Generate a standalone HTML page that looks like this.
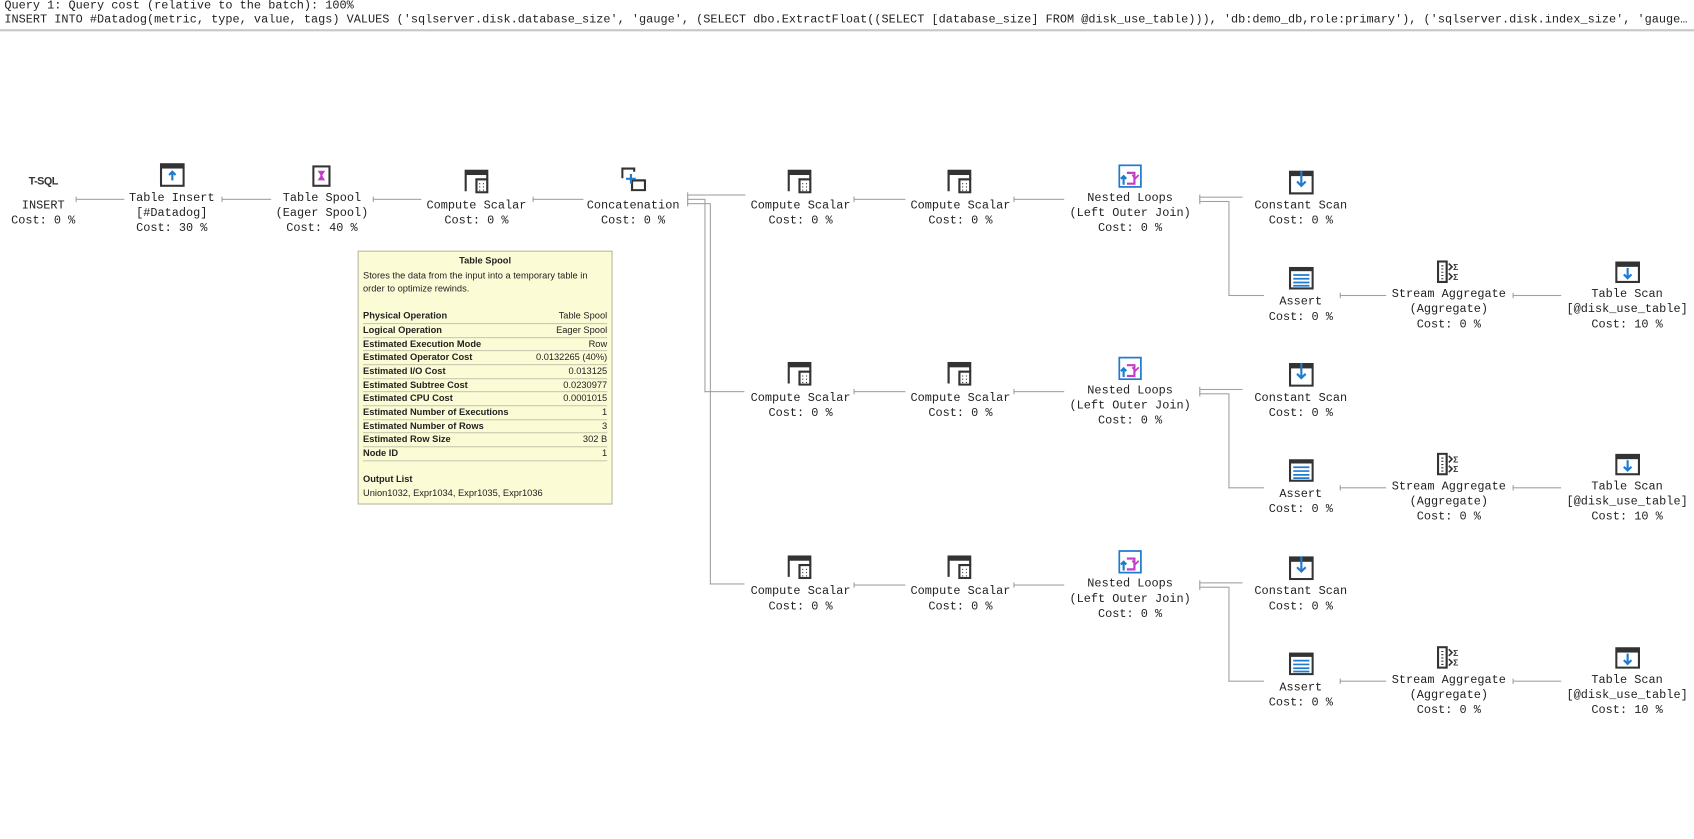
<!DOCTYPE html>
<html><head><meta charset="utf-8">
<style>
html,body{margin:0;padding:0;background:#fff;width:1694px;height:839px;overflow:hidden}
#w{position:absolute;left:0;top:0;width:1568px;height:777px;overflow:hidden;transform:scale(1.0804);transform-origin:0 0;font-family:"Liberation Mono",monospace;font-size:11px;color:#222}
.hd{position:absolute;left:4px;width:1558px;overflow:hidden;white-space:pre;line-height:13px;text-overflow:ellipsis}
.n{position:absolute;width:200px;text-align:center;line-height:14px;white-space:pre}
.ic{position:absolute}
.h{position:absolute;height:1px;background:#a0a0a0}
.v{position:absolute;width:1px;background:#a0a0a0}
.a{position:absolute;width:1px;height:5px;background:#a0a0a0}
#tt{position:absolute;left:331px;top:232px;width:234px;height:233px;background:#fbfbd6;border:1px solid #b8b8a0;font-family:"Liberation Sans",sans-serif;font-size:8.6px;color:#222}
#tt .r{position:absolute;left:4px;right:4px;height:12.7px;border-bottom:1px solid #c9c9b0;line-height:12px}
#tt .r b{float:left}
#tt .r span{float:right}
</style></head><body><div id="w">
<div class="hd" style="top:0">Query 1: Query cost (relative to the batch): 100%</div>
<div class="hd" style="top:13px">INSERT INTO #Datadog(metric, type, value, tags) VALUES ('sqlserver.disk.database_size', 'gauge', (SELECT dbo.ExtractFloat((SELECT [database_size] FROM @disk_use_table))), 'db:demo_db,role:primary'), ('sqlserver.disk.index_size', 'gauge', (SELECT dbo...</div>
<div style="position:absolute;left:0;top:27px;width:1568px;height:2px;background:#c8c8c8"></div>

<div class="n" style="left:-60px;top:162px;font-family:'Liberation Sans',sans-serif;font-size:10px;font-weight:bold;letter-spacing:-0.5px;color:#333">T-SQL</div>
<div class="n" style="left:-60px;top:184px">INSERT
Cost: 0 %</div>
<div class="n" style="left:59px;top:177px">Table Insert
[#Datadog]
Cost: 30 %</div>
<div class="n" style="left:198px;top:177px">Table Spool
(Eager Spool)
Cost: 40 %</div>
<div class="n" style="left:341px;top:184px">Compute Scalar
Cost: 0 %</div>
<div class="n" style="left:486px;top:184px">Concatenation
Cost: 0 %</div>

<svg class="ic" style="left:148px;top:151px" width="23" height="22" viewBox="0 0 23 22"><rect x="1" y="1" width="21" height="20" fill="none" stroke="#333" stroke-width="2"/><rect x="1" y="1" width="21" height="4" fill="#333"/><rect x="6" y="8" width="11" height="9" fill="#fff"/><path d="M11.5 16V8M8.5 11l3-3 3 3" stroke="#1e7bd0" stroke-width="2" fill="none"/></svg>
<svg class="ic" style="left:289px;top:153px" width="17" height="20" viewBox="0 0 17 20"><rect x="1" y="1" width="15" height="18" fill="#fff" stroke="#333" stroke-width="2"/><path d="M5 5h7l-2.5 4v1l2.5 4H5l2.5-4V9z" fill="#c13ec9"/></svg>
<svg class="ic" style="left:430px;top:157px" width="23" height="22" viewBox="0 0 23 22"><path d="M1 20V1h20v8" stroke="#333" stroke-width="2" fill="none"/><rect x="1" y="1" width="20" height="4" fill="#333"/><rect x="11" y="9" width="10" height="12" fill="#fff" stroke="#333" stroke-width="2"/><path d="M13.5 13h1M17 13h1M13.5 16h1M17 16h1M13.5 19h1M17 19h1" stroke="#333"/></svg>
<svg class="ic" style="left:575px;top:155px" width="23" height="22" viewBox="0 0 23 22"><path d="M1 10V1h11v3" stroke="#333" stroke-width="2" fill="none"/><path d="M10 12v9h12v-9z" fill="#fff" stroke="#333" stroke-width="2"/><rect x="10" y="11" width="12" height="2" fill="#333"/><path d="M9 6v9M4.5 10.5h9" stroke="#1e7bd0" stroke-width="2"/></svg>

<div class="h" style="left:70px;top:184px;width:45px"></div><div class="a" style="left:70px;top:182px"></div>
<div class="h" style="left:205px;top:184px;width:46px"></div><div class="a" style="left:205px;top:182px"></div>
<div class="h" style="left:345px;top:184px;width:45px"></div><div class="a" style="left:345px;top:182px"></div>
<div class="h" style="left:493px;top:184px;width:47px"></div><div class="a" style="left:493px;top:182px"></div>

<div class="h" style="left:636px;top:180px;width:54px"></div><div class="a" style="left:636px;top:178px"></div>
<div class="h" style="left:636px;top:184px;width:16px"></div><div class="a" style="left:636px;top:182px"></div>
<div class="h" style="left:636px;top:188px;width:21px"></div><div class="a" style="left:636px;top:186px"></div>
<div class="v" style="left:652px;top:184px;height:179px"></div>
<div class="h" style="left:652px;top:362px;width:37px"></div>
<div class="v" style="left:657px;top:188px;height:353px"></div>
<div class="h" style="left:657px;top:540px;width:32px"></div>

<div style="position:absolute;left:0;top:0">
<div class="n" style="left:641px;top:184px">Compute Scalar
Cost: 0 %</div>
<div class="n" style="left:789px;top:184px">Compute Scalar
Cost: 0 %</div>
<div class="n" style="left:946px;top:177px">Nested Loops
(Left Outer Join)
Cost: 0 %</div>
<div class="n" style="left:1104px;top:184px">Constant Scan
Cost: 0 %</div>
<div class="n" style="left:1104px;top:273px">Assert
Cost: 0 %</div>
<div class="n" style="left:1241px;top:266px">Stream Aggregate
(Aggregate)
Cost: 0 %</div>
<div class="n" style="left:1406px;top:266px">Table Scan
[@disk_use_table]
Cost: 10 %</div>
<svg class="ic" style="left:729px;top:157px" width="23" height="22" viewBox="0 0 23 22"><path d="M1 20V1h20v8" stroke="#333" stroke-width="2" fill="none"/><rect x="1" y="1" width="20" height="4" fill="#333"/><rect x="11" y="9" width="10" height="12" fill="#fff" stroke="#333" stroke-width="2"/><path d="M13.5 13h1M17 13h1M13.5 16h1M17 16h1M13.5 19h1M17 19h1" stroke="#333"/></svg>
<svg class="ic" style="left:877px;top:157px" width="23" height="22" viewBox="0 0 23 22"><path d="M1 20V1h20v8" stroke="#333" stroke-width="2" fill="none"/><rect x="1" y="1" width="20" height="4" fill="#333"/><rect x="11" y="9" width="10" height="12" fill="#fff" stroke="#333" stroke-width="2"/><path d="M13.5 13h1M17 13h1M13.5 16h1M17 16h1M13.5 19h1M17 19h1" stroke="#333"/></svg>
<svg class="ic" style="left:1035px;top:152px" width="22" height="22" viewBox="0 0 22 22"><rect x="1" y="1" width="20" height="20" fill="#fff" stroke="#1e7bd0" stroke-width="1.6"/><path d="M8 8h7v10h-7" stroke="#c13ec9" stroke-width="2" fill="none"/><path d="M13 10l3 3 3-3" stroke="#c13ec9" stroke-width="1.6" fill="none"/><path d="M5 19v-8M2.5 13.5L5 11l2.5 2.5" stroke="#1e7bd0" stroke-width="2" fill="none"/></svg>
<svg class="ic" style="left:1193px;top:157px" width="23" height="23" viewBox="0 0 23 23"><rect x="1" y="2" width="21" height="20" fill="#fff" stroke="#333" stroke-width="2"/><rect x="1" y="2" width="21" height="4" fill="#333"/><path d="M11.5 1v14M7.5 11l4 4 4-4" stroke="#1e7bd0" stroke-width="2" fill="none"/></svg>
<svg class="ic" style="left:1193px;top:247px" width="23" height="21" viewBox="0 0 23 21"><rect x="1" y="1" width="21" height="19" fill="#fff" stroke="#333" stroke-width="2"/><rect x="1" y="1" width="21" height="3" fill="#333"/><path d="M4 7.5h15M4 11h15M4 14.5h15M4 17.5h15" stroke="#1e7bd0" stroke-width="1.6"/></svg>
<svg class="ic" style="left:1330px;top:241px" width="24" height="21" viewBox="0 0 24 21"><rect x="1" y="1" width="8" height="19" fill="#fff" stroke="#333" stroke-width="2"/><path d="M4 5h2M4 8h2M4 11h2M4 14h2M4 17h2" stroke="#333"/><path d="M11 3l3 3-3 3M11 12l3 3-3 3" stroke="#333" stroke-width="1.5" fill="none"/><text x="15" y="9" font-family="Liberation Sans" font-size="8" font-weight="bold" fill="#333">Σ</text><text x="15" y="18" font-family="Liberation Sans" font-size="8" font-weight="bold" fill="#333">Σ</text></svg>
<svg class="ic" style="left:1495px;top:242px" width="23" height="20" viewBox="0 0 23 20"><rect x="1" y="1" width="21" height="18" fill="#fff" stroke="#333" stroke-width="2"/><rect x="1" y="1" width="21" height="4" fill="#333"/><path d="M11.5 6v9M8 12l3.5 3.5 3.5-3.5" stroke="#1e7bd0" stroke-width="2" fill="none"/></svg>
<div class="h" style="left:790px;top:184px;width:48px"></div><div class="a" style="left:790px;top:182px"></div>
<div class="h" style="left:938px;top:184px;width:47px"></div><div class="a" style="left:938px;top:182px"></div>
<div class="h" style="left:1110px;top:182px;width:40px"></div><div class="a" style="left:1110px;top:180px"></div>
<div class="h" style="left:1110px;top:186px;width:27px"></div><div class="a" style="left:1110px;top:184px"></div>
<div class="v" style="left:1137px;top:186px;height:88px"></div>
<div class="h" style="left:1137px;top:273px;width:33px"></div>
<div class="h" style="left:1240px;top:273px;width:43px"></div><div class="a" style="left:1240px;top:271px"></div>
<div class="h" style="left:1400px;top:273px;width:45px"></div><div class="a" style="left:1400px;top:271px"></div>
</div>

<div style="position:absolute;left:0;top:178px">
<div class="n" style="left:641px;top:184px">Compute Scalar
Cost: 0 %</div>
<div class="n" style="left:789px;top:184px">Compute Scalar
Cost: 0 %</div>
<div class="n" style="left:946px;top:177px">Nested Loops
(Left Outer Join)
Cost: 0 %</div>
<div class="n" style="left:1104px;top:184px">Constant Scan
Cost: 0 %</div>
<div class="n" style="left:1104px;top:273px">Assert
Cost: 0 %</div>
<div class="n" style="left:1241px;top:266px">Stream Aggregate
(Aggregate)
Cost: 0 %</div>
<div class="n" style="left:1406px;top:266px">Table Scan
[@disk_use_table]
Cost: 10 %</div>
<svg class="ic" style="left:729px;top:157px" width="23" height="22" viewBox="0 0 23 22"><path d="M1 20V1h20v8" stroke="#333" stroke-width="2" fill="none"/><rect x="1" y="1" width="20" height="4" fill="#333"/><rect x="11" y="9" width="10" height="12" fill="#fff" stroke="#333" stroke-width="2"/><path d="M13.5 13h1M17 13h1M13.5 16h1M17 16h1M13.5 19h1M17 19h1" stroke="#333"/></svg>
<svg class="ic" style="left:877px;top:157px" width="23" height="22" viewBox="0 0 23 22"><path d="M1 20V1h20v8" stroke="#333" stroke-width="2" fill="none"/><rect x="1" y="1" width="20" height="4" fill="#333"/><rect x="11" y="9" width="10" height="12" fill="#fff" stroke="#333" stroke-width="2"/><path d="M13.5 13h1M17 13h1M13.5 16h1M17 16h1M13.5 19h1M17 19h1" stroke="#333"/></svg>
<svg class="ic" style="left:1035px;top:152px" width="22" height="22" viewBox="0 0 22 22"><rect x="1" y="1" width="20" height="20" fill="#fff" stroke="#1e7bd0" stroke-width="1.6"/><path d="M8 8h7v10h-7" stroke="#c13ec9" stroke-width="2" fill="none"/><path d="M13 10l3 3 3-3" stroke="#c13ec9" stroke-width="1.6" fill="none"/><path d="M5 19v-8M2.5 13.5L5 11l2.5 2.5" stroke="#1e7bd0" stroke-width="2" fill="none"/></svg>
<svg class="ic" style="left:1193px;top:157px" width="23" height="23" viewBox="0 0 23 23"><rect x="1" y="2" width="21" height="20" fill="#fff" stroke="#333" stroke-width="2"/><rect x="1" y="2" width="21" height="4" fill="#333"/><path d="M11.5 1v14M7.5 11l4 4 4-4" stroke="#1e7bd0" stroke-width="2" fill="none"/></svg>
<svg class="ic" style="left:1193px;top:247px" width="23" height="21" viewBox="0 0 23 21"><rect x="1" y="1" width="21" height="19" fill="#fff" stroke="#333" stroke-width="2"/><rect x="1" y="1" width="21" height="3" fill="#333"/><path d="M4 7.5h15M4 11h15M4 14.5h15M4 17.5h15" stroke="#1e7bd0" stroke-width="1.6"/></svg>
<svg class="ic" style="left:1330px;top:241px" width="24" height="21" viewBox="0 0 24 21"><rect x="1" y="1" width="8" height="19" fill="#fff" stroke="#333" stroke-width="2"/><path d="M4 5h2M4 8h2M4 11h2M4 14h2M4 17h2" stroke="#333"/><path d="M11 3l3 3-3 3M11 12l3 3-3 3" stroke="#333" stroke-width="1.5" fill="none"/><text x="15" y="9" font-family="Liberation Sans" font-size="8" font-weight="bold" fill="#333">Σ</text><text x="15" y="18" font-family="Liberation Sans" font-size="8" font-weight="bold" fill="#333">Σ</text></svg>
<svg class="ic" style="left:1495px;top:242px" width="23" height="20" viewBox="0 0 23 20"><rect x="1" y="1" width="21" height="18" fill="#fff" stroke="#333" stroke-width="2"/><rect x="1" y="1" width="21" height="4" fill="#333"/><path d="M11.5 6v9M8 12l3.5 3.5 3.5-3.5" stroke="#1e7bd0" stroke-width="2" fill="none"/></svg>
<div class="h" style="left:790px;top:184px;width:48px"></div><div class="a" style="left:790px;top:182px"></div>
<div class="h" style="left:938px;top:184px;width:47px"></div><div class="a" style="left:938px;top:182px"></div>
<div class="h" style="left:1110px;top:182px;width:40px"></div><div class="a" style="left:1110px;top:180px"></div>
<div class="h" style="left:1110px;top:186px;width:27px"></div><div class="a" style="left:1110px;top:184px"></div>
<div class="v" style="left:1137px;top:186px;height:88px"></div>
<div class="h" style="left:1137px;top:273px;width:33px"></div>
<div class="h" style="left:1240px;top:273px;width:43px"></div><div class="a" style="left:1240px;top:271px"></div>
<div class="h" style="left:1400px;top:273px;width:45px"></div><div class="a" style="left:1400px;top:271px"></div>
</div>

<div style="position:absolute;left:0;top:357px">
<div class="n" style="left:641px;top:184px">Compute Scalar
Cost: 0 %</div>
<div class="n" style="left:789px;top:184px">Compute Scalar
Cost: 0 %</div>
<div class="n" style="left:946px;top:177px">Nested Loops
(Left Outer Join)
Cost: 0 %</div>
<div class="n" style="left:1104px;top:184px">Constant Scan
Cost: 0 %</div>
<div class="n" style="left:1104px;top:273px">Assert
Cost: 0 %</div>
<div class="n" style="left:1241px;top:266px">Stream Aggregate
(Aggregate)
Cost: 0 %</div>
<div class="n" style="left:1406px;top:266px">Table Scan
[@disk_use_table]
Cost: 10 %</div>
<svg class="ic" style="left:729px;top:157px" width="23" height="22" viewBox="0 0 23 22"><path d="M1 20V1h20v8" stroke="#333" stroke-width="2" fill="none"/><rect x="1" y="1" width="20" height="4" fill="#333"/><rect x="11" y="9" width="10" height="12" fill="#fff" stroke="#333" stroke-width="2"/><path d="M13.5 13h1M17 13h1M13.5 16h1M17 16h1M13.5 19h1M17 19h1" stroke="#333"/></svg>
<svg class="ic" style="left:877px;top:157px" width="23" height="22" viewBox="0 0 23 22"><path d="M1 20V1h20v8" stroke="#333" stroke-width="2" fill="none"/><rect x="1" y="1" width="20" height="4" fill="#333"/><rect x="11" y="9" width="10" height="12" fill="#fff" stroke="#333" stroke-width="2"/><path d="M13.5 13h1M17 13h1M13.5 16h1M17 16h1M13.5 19h1M17 19h1" stroke="#333"/></svg>
<svg class="ic" style="left:1035px;top:152px" width="22" height="22" viewBox="0 0 22 22"><rect x="1" y="1" width="20" height="20" fill="#fff" stroke="#1e7bd0" stroke-width="1.6"/><path d="M8 8h7v10h-7" stroke="#c13ec9" stroke-width="2" fill="none"/><path d="M13 10l3 3 3-3" stroke="#c13ec9" stroke-width="1.6" fill="none"/><path d="M5 19v-8M2.5 13.5L5 11l2.5 2.5" stroke="#1e7bd0" stroke-width="2" fill="none"/></svg>
<svg class="ic" style="left:1193px;top:157px" width="23" height="23" viewBox="0 0 23 23"><rect x="1" y="2" width="21" height="20" fill="#fff" stroke="#333" stroke-width="2"/><rect x="1" y="2" width="21" height="4" fill="#333"/><path d="M11.5 1v14M7.5 11l4 4 4-4" stroke="#1e7bd0" stroke-width="2" fill="none"/></svg>
<svg class="ic" style="left:1193px;top:247px" width="23" height="21" viewBox="0 0 23 21"><rect x="1" y="1" width="21" height="19" fill="#fff" stroke="#333" stroke-width="2"/><rect x="1" y="1" width="21" height="3" fill="#333"/><path d="M4 7.5h15M4 11h15M4 14.5h15M4 17.5h15" stroke="#1e7bd0" stroke-width="1.6"/></svg>
<svg class="ic" style="left:1330px;top:241px" width="24" height="21" viewBox="0 0 24 21"><rect x="1" y="1" width="8" height="19" fill="#fff" stroke="#333" stroke-width="2"/><path d="M4 5h2M4 8h2M4 11h2M4 14h2M4 17h2" stroke="#333"/><path d="M11 3l3 3-3 3M11 12l3 3-3 3" stroke="#333" stroke-width="1.5" fill="none"/><text x="15" y="9" font-family="Liberation Sans" font-size="8" font-weight="bold" fill="#333">Σ</text><text x="15" y="18" font-family="Liberation Sans" font-size="8" font-weight="bold" fill="#333">Σ</text></svg>
<svg class="ic" style="left:1495px;top:242px" width="23" height="20" viewBox="0 0 23 20"><rect x="1" y="1" width="21" height="18" fill="#fff" stroke="#333" stroke-width="2"/><rect x="1" y="1" width="21" height="4" fill="#333"/><path d="M11.5 6v9M8 12l3.5 3.5 3.5-3.5" stroke="#1e7bd0" stroke-width="2" fill="none"/></svg>
<div class="h" style="left:790px;top:184px;width:48px"></div><div class="a" style="left:790px;top:182px"></div>
<div class="h" style="left:938px;top:184px;width:47px"></div><div class="a" style="left:938px;top:182px"></div>
<div class="h" style="left:1110px;top:182px;width:40px"></div><div class="a" style="left:1110px;top:180px"></div>
<div class="h" style="left:1110px;top:186px;width:27px"></div><div class="a" style="left:1110px;top:184px"></div>
<div class="v" style="left:1137px;top:186px;height:88px"></div>
<div class="h" style="left:1137px;top:273px;width:33px"></div>
<div class="h" style="left:1240px;top:273px;width:43px"></div><div class="a" style="left:1240px;top:271px"></div>
<div class="h" style="left:1400px;top:273px;width:45px"></div><div class="a" style="left:1400px;top:271px"></div>
</div>

<div id="tt">
<div style="position:absolute;left:0;right:0;top:3px;text-align:center;font-weight:bold">Table Spool</div>
<div style="position:absolute;left:4px;right:4px;top:16px;line-height:12px">Stores the data from the input into a temporary table in order to optimize rewinds.</div>
<div class="r" style="top:53px"><b>Physical Operation</b><span>Table Spool</span></div>
<div class="r" style="top:66px"><b>Logical Operation</b><span>Eager Spool</span></div>
<div class="r" style="top:78.5px"><b>Estimated Execution Mode</b><span>Row</span></div>
<div class="r" style="top:91px"><b>Estimated Operator Cost</b><span>0.0132265 (40%)</span></div>
<div class="r" style="top:104px"><b>Estimated I/O Cost</b><span>0.013125</span></div>
<div class="r" style="top:116.5px"><b>Estimated Subtree Cost</b><span>0.0230977</span></div>
<div class="r" style="top:129px"><b>Estimated CPU Cost</b><span>0.0001015</span></div>
<div class="r" style="top:142px"><b>Estimated Number of Executions</b><span>1</span></div>
<div class="r" style="top:154.5px"><b>Estimated Number of Rows</b><span>3</span></div>
<div class="r" style="top:167px"><b>Estimated Row Size</b><span>302 B</span></div>
<div class="r" style="top:180px"><b>Node ID</b><span>1</span></div>
<div style="position:absolute;left:4px;top:205px;font-weight:bold">Output List</div>
<div style="position:absolute;left:4px;top:218px">Union1032, Expr1034, Expr1035, Expr1036</div>
</div>
</div></body></html>
